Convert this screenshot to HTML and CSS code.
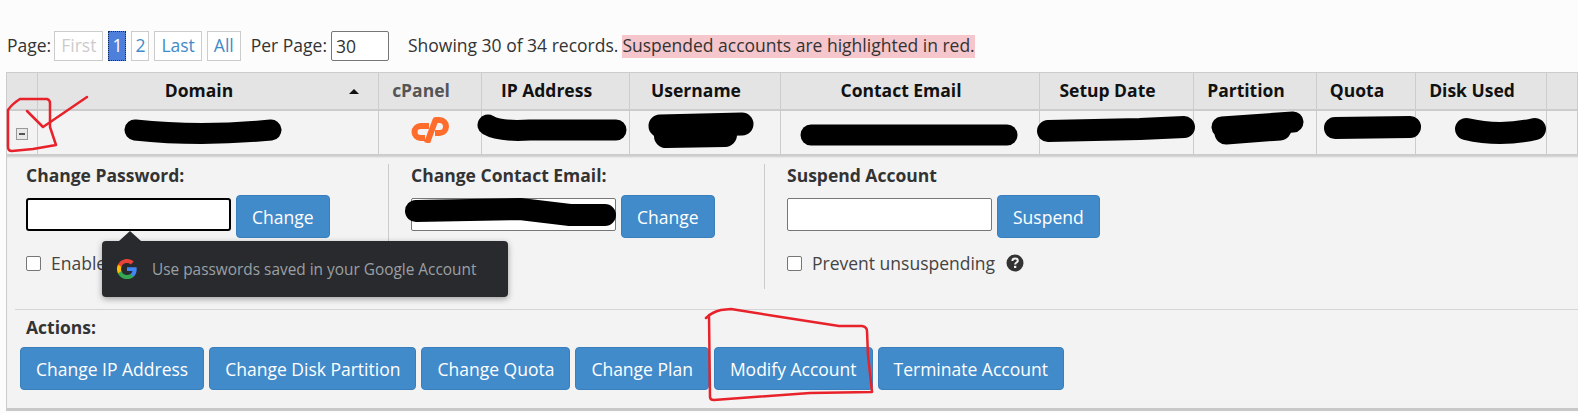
FILE: index.html
```html
<!DOCTYPE html>
<html lang="en">
<head>
  <meta charset="UTF-8" />
  <title>List Accounts</title>
  <link rel="stylesheet" href="styles.css">
</head>
<body>
  <div class="page">
    <div class="pager">
      <span class="pager-label">Page:</span>
      <a class="page-link disabled">First</a>
      <a class="page-link num current">1</a>
      <a class="page-link num">2</a>
      <a class="page-link">Last</a>
      <a class="page-link">All</a>
      <span class="per-page">Per Page:</span>
      <input class="per-page-input" type="text" value="30" />
      <span class="records">Showing 30 of 34 records.</span>
      <span class="suspended-note">Suspended accounts are highlighted in red.</span>
    </div>

    <table class="accounts">
      <colgroup>
        <col class="c-toggle"><col class="c-domain"><col class="c-cpanel"><col class="c-ip"><col class="c-user">
        <col class="c-email"><col class="c-date"><col class="c-part"><col class="c-quota"><col class="c-disk"><col>
      </colgroup>
      <thead>
        <tr>
          <th></th>
          <th class="sorted">Domain</th>
          <th class="muted">cPanel</th>
          <th>IP Address</th>
          <th>Username</th>
          <th>Contact Email</th>
          <th>Setup Date</th>
          <th>Partition</th>
          <th>Quota</th>
          <th>Disk Used</th>
          <th></th>
        </tr>
      </thead>
      <tbody>
        <tr>
          <td class="toggle-cell"><span class="toggle"></span></td>
          <td></td>
          <td class="logo-cell">
            <svg class="cp-logo" viewBox="0 0 38 26" width="38" height="26">
              <path d="M18 9H9.500A6 6 0 0 0 9.500 21H14" fill="none" stroke="#ff6c2c" stroke-width="6"/>
              <path d="M16 26L24.500 3H28.500A6.500 6.500 0 0 1 28.500 16H24" fill="none" stroke="#ff6c2c" stroke-width="6" stroke-linejoin="round"/>
            </svg>
          </td>
          <td></td><td></td><td></td><td></td><td></td><td></td><td></td><td></td>
        </tr>
      </tbody>
    </table>

    <div class="panel">
      <div class="forms">
        <div class="form-col col-password">
          <h4>Change Password:</h4>
          <div class="field-row">
            <input class="field focused" type="password" />
            <button class="btn">Change</button>
          </div>
          <label class="check-row"><input type="checkbox" /> Enable</label>
        </div>
        <div class="form-col col-email">
          <h4>Change Contact Email:</h4>
          <div class="field-row">
            <input class="field" type="text" />
            <button class="btn">Change</button>
          </div>
        </div>
        <div class="form-col col-suspend">
          <h4>Suspend Account</h4>
          <div class="field-row">
            <input class="field" type="text" />
            <button class="btn">Suspend</button>
          </div>
          <label class="check-row"><input type="checkbox" /> Prevent unsuspending
            <svg class="help" viewBox="0 0 18 18" width="18" height="18">
              <circle cx="9" cy="9" r="8.500" fill="#333"/>
              <path d="M6.300 7C6.400 5.300 7.600 4.500 9.100 4.500C10.700 4.500 11.800 5.400 11.800 6.700C11.800 8.600 9.200 8.500 9.200 10.400" fill="none" stroke="#f3f3f3" stroke-width="2"/>
              <rect x="8" y="11.800" width="2.300" height="2.200" fill="#f3f3f3"/>
            </svg>
          </label>
        </div>
      </div>

      <div class="actions">
        <h4>Actions:</h4>
        <div class="action-btns">
          <button class="btn">Change IP Address</button>
          <button class="btn">Change Disk Partition</button>
          <button class="btn">Change Quota</button>
          <button class="btn">Change Plan</button>
          <button class="btn">Modify Account</button>
          <button class="btn">Terminate Account</button>
        </div>
      </div>

      <div class="pw-tooltip">
        <svg class="g-logo" viewBox="0 0 24 24" width="22" height="22">
          <path fill="#4285F4" d="M22.560 12.250c0-.78-.07-1.530-.2-2.250H12v4.260h5.920c-.26 1.370-1.040 2.530-2.210 3.310v2.770h3.570c2.080-1.920 3.280-4.740 3.280-8.090z"/>
          <path fill="#34A853" d="M12 23c2.970 0 5.460-.98 7.280-2.660l-3.570-2.770c-.98.66-2.230 1.060-3.710 1.060-2.860 0-5.290-1.930-5.840-4.530H2.180v2.840C3.990 20.530 7.700 23 12 23z"/>
          <path fill="#FBBC05" d="M5.840 14.090c-.22-.66-.35-1.360-.35-2.090s.13-1.430.35-2.090V7.070H2.180C1.430 8.550 1 10.220 1 12s.43 3.450 1.180 4.930l3.660-2.840z"/>
          <path fill="#EA4335" d="M12 5.380c1.620 0 3.060.56 4.210 1.640l3.150-3.150C17.450 2.090 14.970 1 12 1 7.700 1 3.990 3.470 2.180 7.070l3.660 2.840c.55-2.600 2.980-4.530 5.840-4.530z"/>
        </svg>
        <span>Use passwords saved in your Google Account</span>
      </div>
    </div>

    <!-- redactions and red pen marks drawn over the screenshot -->
    <svg class="marks" viewBox="0 0 1578 413" width="1578" height="413">
      <g class="redact">
        <path d="M135 130Q200 137 271 130" stroke-width="21"/>
        <path d="M488 125Q500 132 530 130L616 130" stroke-width="21"/>
        <path d="M660 126L742 124" stroke-width="23"/>
        <path d="M666 136L725 135" stroke-width="24"/>
        <path d="M811 135L1007 135" stroke-width="21"/>
        <path d="M1048 131L1140 129L1184 127" stroke-width="22"/>
        <path d="M1222 127L1293 122" stroke-width="21"/>
        <path d="M1226 133L1280 129" stroke-width="23"/>
        <path d="M1335 128L1410 127" stroke-width="22"/>
        <path d="M1466 129Q1500 137 1535 129" stroke-width="22"/>
        <path d="M416 211L520 209L570 215L605 215" stroke-width="22"/>
      </g>
      <g class="pen">
        <path d="M8 147L8 110Q12 104 20 99L47 99Q50 100 50 103L50 127L56 145L33 149L12 151Q8 151 8 147Z"/>
        <path d="M27 111L43 127L87 97"/>
        <path d="M706 318Q712 312 721 310L731 309L781 317L839 326L862 326Q867 327 867 331L868 355L872 392L810 393L714 400Q710 400 710 397L709 315"/>
      </g>
    </svg>
  </div>
</body>
</html>
```

FILE: styles.css
```css
* {
  box-sizing: border-box;
}

html, body {
  margin: 0;
  height: 100%;
  overflow: hidden;
}

body {
  background: #fcfcfc;
  color: #333;
  font-family: 'Open Sans', sans-serif;
  font-size: 17.500px;
}

.page {
  position: relative;
  padding: 31px 0 0 6px;
}

/* pager */

.pager {
  display: flex;
  align-items: center;
  height: 30px;
  padding-left: 1px;
  margin-bottom: 11px;
}

.pager-label {
  margin-right: 3px;
  margin-bottom: 2px;
}

.page-link {
  height: 30px;
  line-height: 26px;
  padding: 0 6px;
  margin-right: 5px;
  border: 1px solid #ccc;
  background: #fff;
  color: #428bca;
}

.page-link.num {
  padding: 0 3px;
}

.page-link.disabled {
  color: #ccc;
}

.page-link.current {
  background: #4d7fdb;
  border: 1px dotted #1b2a55;
  color: #fff;
}

.per-page {
  margin-left: 5px;
  margin-right: 4px;
  margin-bottom: 2px;
}

.per-page-input {
  width: 58px;
  height: 30px;
  padding: 0 4px;
  border: 1px solid #767676;
  border-radius: 2px;
  background: #fff;
  color: #333;
  font: inherit;
}

.records {
  margin-left: 19px;
  margin-right: 4px;
  margin-bottom: 2px;
}

.suspended-note {
  background: #f5c6cb;
  line-height: 21px;
  padding-bottom: 2px;
}

/* table */

.accounts {
  width: 1572px;
  table-layout: fixed;
  border-collapse: separate;
  border-spacing: 0;
  border-top: 1px solid #ccc;
  border-left: 1px solid #ccc;
}

.c-toggle { width: 31px; }
.c-domain { width: 341px; }
.c-cpanel { width: 103px; }
.c-ip { width: 148px; }
.c-user { width: 151px; }
.c-email { width: 259px; }
.c-date { width: 154px; }
.c-part { width: 123px; }
.c-quota { width: 99px; }
.c-disk { width: 131px; }

.accounts th {
  position: relative;
  height: 38px;
  padding: 0 18px 2px 0;
  background: #e4e4e4;
  border-right: 1px solid #ccc;
  border-bottom: 2px solid #ccc;
  color: #111;
  font-weight: 700;
  text-align: center;
}

.accounts th.muted {
  color: #555;
}

.accounts th.sorted::after {
  content: "";
  position: absolute;
  right: 19px;
  top: 16px;
  border-left: 5px solid transparent;
  border-right: 5px solid transparent;
  border-bottom: 5px solid #111;
}

.accounts td {
  height: 44px;
  padding: 0;
  background: #f3f3f3;
  border-right: 1px solid #ccc;
  border-bottom: 1px solid #ccc;
}

.toggle-cell {
  padding-left: 9px !important;
}

.toggle {
  display: block;
  position: relative;
  top: 1px;
  width: 12px;
  height: 12px;
  border: 1px solid #999;
  background: #e8e8e8;
}

.toggle::after {
  content: "";
  position: absolute;
  left: 2px;
  right: 2px;
  top: 4px;
  height: 2px;
  background: #555;
}

.logo-cell {
  text-align: center;
  padding-right: 1px !important;
}

.cp-logo {
  display: block;
  margin: -6px auto 0;
}

/* expanded panel */

.panel {
  position: relative;
  height: 256px;
  background: #f3f3f3;
  border-left: 1px solid #ccc;
  border-bottom: 3px solid #c8c8c8;
  box-shadow: inset 0 3px 2px -1px #ccc;
}

.panel h4 {
  margin: 0;
  line-height: 22px;
  font-size: 17.500px;
  font-weight: 700;
}

.forms {
  display: flex;
  height: 154px;
  padding-top: 9px;
}

.form-col {
  height: 125px;
}

.col-password {
  width: 381px;
  padding-left: 19px;
}

.col-email {
  width: 376px;
  padding-left: 22px;
  border-left: 1px solid #ccc;
}

.col-suspend {
  padding-left: 22px;
  border-left: 1px solid #ccc;
}

.field-row {
  display: flex;
  align-items: flex-start;
  gap: 5px;
  margin-top: 9px;
}

.field {
  width: 205px;
  height: 33px;
  margin-top: 3px;
  border: 1px solid #767676;
  border-radius: 2px;
  background: #fff;
}

.field.focused {
  border: 2px solid #000;
  border-radius: 3px;
  outline: none;
}

.check-row {
  display: flex;
  align-items: center;
  gap: 10px;
  margin-top: 13px;
  color: #444;
}

.check-row input {
  appearance: none;
  width: 15px;
  height: 15px;
  margin: 0;
  border: 1px solid #767676;
  border-radius: 2px;
  background: #fff;
}

.help {
  margin-left: 1px;
}

.btn {
  height: 43px;
  padding: 0 15px;
  border: 1px solid #3a7fbd;
  border-radius: 4px;
  background: #428bca;
  color: #fff;
  font: inherit;
}

.actions {
  margin-left: 8px;
  padding-top: 6px;
  border-top: 1px solid #d5d5d5;
}

.actions h4 {
  margin-left: 11px;
}

.action-btns {
  display: flex;
  gap: 5px;
  margin-top: 9px;
  margin-left: 5px;
}

/* browser password bubble */

.pw-tooltip {
  position: absolute;
  left: 95px;
  top: 86px;
  display: flex;
  align-items: center;
  gap: 14px;
  width: 406px;
  height: 56px;
  padding-left: 14px;
  border-radius: 4px;
  background: #292a2d;
  box-shadow: 0 2px 6px rgba(0, 0, 0, 0.35);
  color: #9aa0a6;
  font-size: 15.400px;
}

.pw-tooltip::before {
  content: "";
  position: absolute;
  left: 17px;
  top: -10px;
  border-left: 11px solid transparent;
  border-right: 11px solid transparent;
  border-bottom: 10px solid #292a2d;
}

/* marks */

.marks {
  position: absolute;
  left: 0;
  top: 0;
  pointer-events: none;
}

.redact path {
  fill: none;
  stroke: #000;
  stroke-linecap: round;
  stroke-linejoin: round;
}

.pen path {
  fill: none;
  stroke: #e8222a;
  stroke-width: 2.500;
  stroke-linecap: round;
  stroke-linejoin: round;
}
```
